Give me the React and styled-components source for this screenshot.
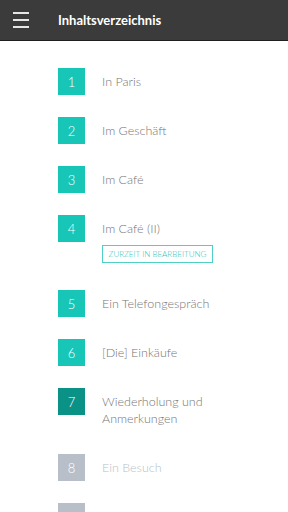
import React from 'react'
import styled, { createGlobalStyle } from 'styled-components'

const GlobalStyle = createGlobalStyle`
  html, body {
    margin: 0;
    padding: 0;
    background: #ffffff;
    font-family: Lato, "Open Sans", sans-serif;
  }
`

const chapters = [
  { num: 1, title: 'In Paris', state: 'done' },
  { num: 2, title: 'Im Geschäft', state: 'done' },
  { num: 3, title: 'Im Café', state: 'done' },
  { num: 4, title: 'Im Café (II)', state: 'done', badge: 'Zurzeit in Bearbeitung' },
  { num: 5, title: 'Ein Telefongespräch', state: 'done' },
  { num: 6, title: '[Die] Einkäufe', state: 'done' },
  { num: 7, title: 'Wiederholung und Anmerkungen', state: 'review' },
  { num: 8, title: 'Ein Besuch', state: 'locked' },
  { num: 9, title: 'Auf der Straße', state: 'locked' },
]

const boxColors = {
  done: '#17c6b7',
  review: '#0b9287',
  locked: '#b8bfc8',
}

function App() {
  return (
    <Page>
      <GlobalStyle />
      <Header>
        <MenuButton aria-label="Menü">
          <span />
          <span />
          <span />
        </MenuButton>
        <Title>Inhaltsverzeichnis</Title>
      </Header>
      <List>
        {chapters.map((c) => (
          <Row key={c.num}>
            <NumBox $state={c.state}>{c.num}</NumBox>
            <TextCol>
              <ChapterTitle $locked={c.state === 'locked'}>{c.title}</ChapterTitle>
              {c.badge && <Badge>{c.badge}</Badge>}
            </TextCol>
          </Row>
        ))}
      </List>
    </Page>
  )
}

const Page = styled.div`
  width: 288px;
  height: 512px;
  overflow: hidden;
`

const Header = styled.header`
  height: 40px;
  background: #3b3b3b;
  border-bottom: 1px solid #1f1f1f;
  display: flex;
  align-items: center;
`

const MenuButton = styled.div`
  width: 58px;
  display: flex;
  flex-direction: column;
  gap: 5px;
  padding-left: 13px;
  box-sizing: border-box;
  span {
    display: block;
    width: 16px;
    height: 2px;
    background: #e6e6e6;
  }
`

const Title = styled.h1`
  margin: 0;
  color: #ffffff;
  font-size: 13px;
  font-weight: 700;
`

const List = styled.ul`
  list-style: none;
  margin: 0;
  padding: 27px 0 0 58px;
`

const Row = styled.li`
  display: flex;
  align-items: flex-start;
  gap: 17px;
  margin-bottom: 22px;
`

const NumBox = styled.div`
  flex: none;
  width: 27px;
  height: 27px;
  background: ${(p) => boxColors[p.$state]};
  color: #ffffff;
  font-size: 13px;
  font-weight: 300;
  display: flex;
  align-items: center;
  justify-content: center;
`

const TextCol = styled.div`
  padding: 5px 0;
  display: flex;
  flex-direction: column;
  align-items: flex-start;
`

const ChapterTitle = styled.div`
  font-size: 12.5px;
  line-height: 17px;
  font-weight: 300;
  color: ${(p) => (p.$locked ? '#b8bfc8' : '#767676')};
  max-width: 140px;
`

const Badge = styled.div`
  margin-top: 8px;
  height: 18px;
  width: 111px;
  box-sizing: border-box;
  border: 1px solid #4fd0c5;
  color: #2cc4b8;
  font-size: 8px;
  font-weight: 300;
  text-transform: uppercase;
  white-space: nowrap;
  display: flex;
  align-items: center;
  justify-content: center;
`

export default App
